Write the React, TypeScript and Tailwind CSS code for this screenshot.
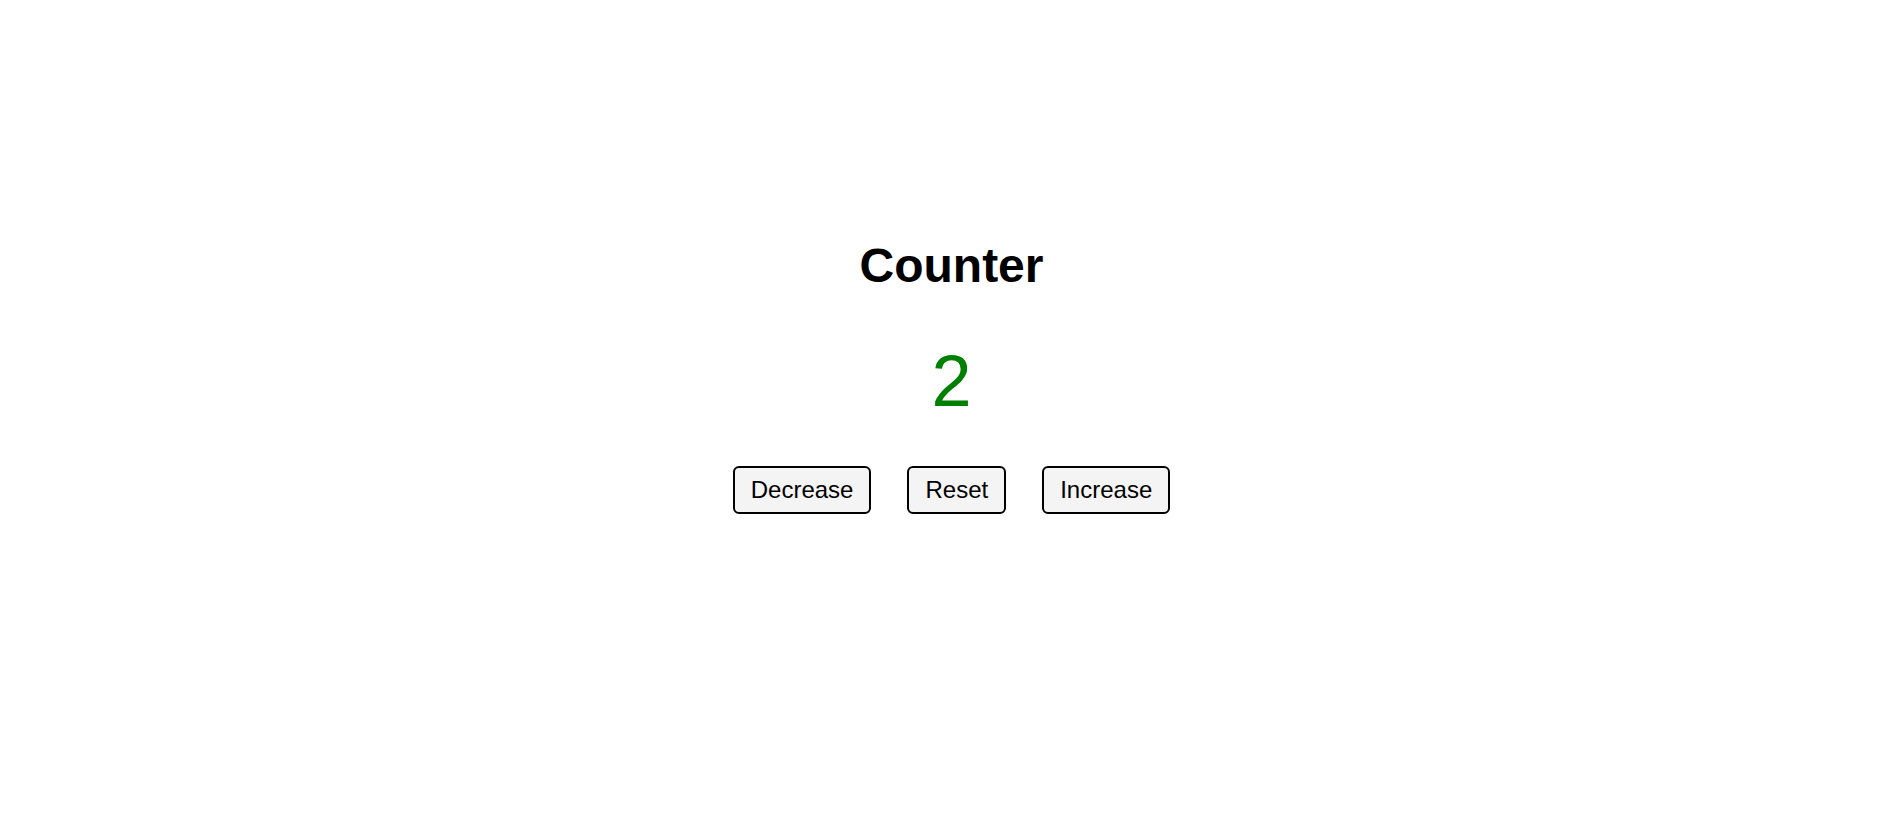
import React, { useState } from 'react'

export default function App() {
  const [count, setCount] = useState(2)

  const btn =
    'px-4 py-2 text-[24px] leading-[28px] text-black bg-[#f4f4f4] border-2 border-black rounded-[6px] cursor-pointer'

  return (
    <div
      className="min-h-screen bg-white flex flex-col items-center pt-[238px] pl-3"
      style={{ fontFamily: '"Liberation Sans", Arial, sans-serif' }}
    >
      <h1 className="text-[48px] leading-[56px] font-bold text-black">Counter</h1>
      <div className="mt-[46px] text-[72px] leading-[83px] text-[#008000]">{count}</div>
      <div className="mt-[43px] flex gap-[36px]">
        <button className={btn} onClick={() => setCount(count - 1)}>
          Decrease
        </button>
        <button className={btn} onClick={() => setCount(0)}>
          Reset
        </button>
        <button className={btn} onClick={() => setCount(count + 1)}>
          Increase
        </button>
      </div>
    </div>
  )
}
